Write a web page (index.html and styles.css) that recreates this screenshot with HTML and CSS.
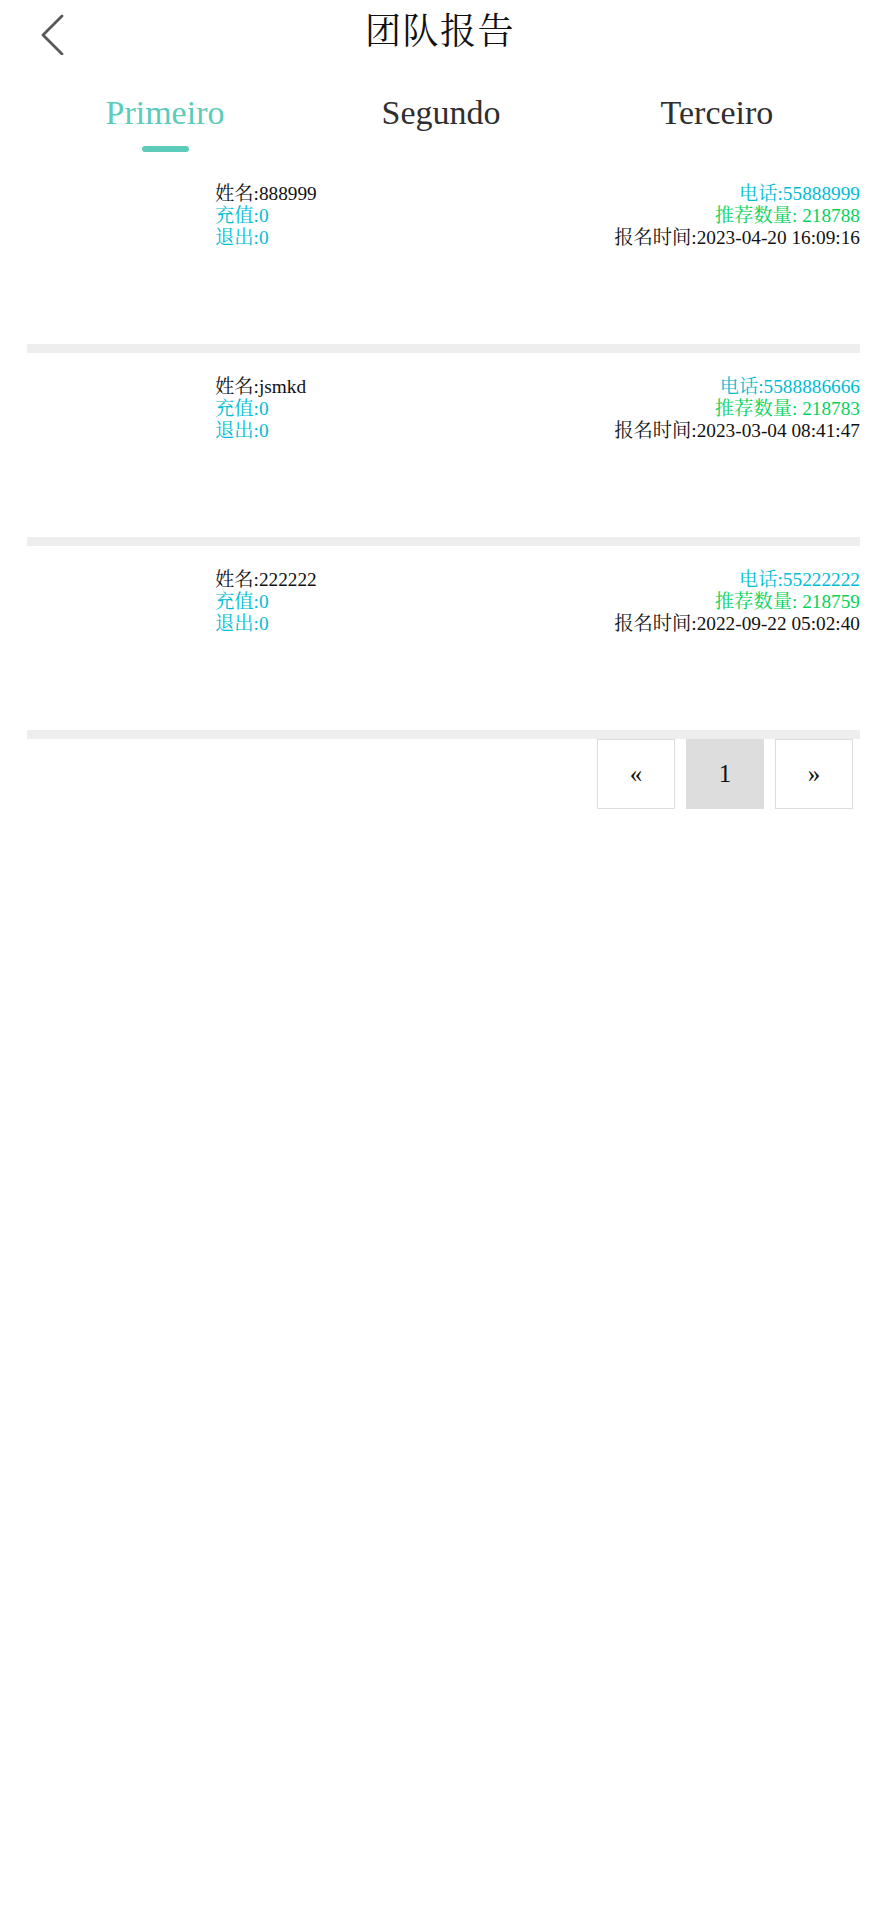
FILE: index.html
```html
<!DOCTYPE html>
<html lang="zh-CN">
<head>
<meta charset="utf-8">
<title>团队报告</title>
<link rel="stylesheet" href="styles.css">
</head>
<body>
<header class="header">
  <div class="back">
    <svg width="26" height="42" viewBox="0 0 26 42" class="back-icon">
      <polyline points="22,3 3,22 22,41" fill="none" stroke="#585858" stroke-width="2.8" stroke-linecap="round" stroke-linejoin="round"/>
    </svg>
  </div>
  <h1 class="title">团队报告</h1>
  <div></div>
</header>

<nav class="tabs">
  <div class="tab active"><span class="tab-label">Primeiro</span><span class="tab-bar"></span></div>
  <div class="tab"><span class="tab-label">Segundo</span></div>
  <div class="tab"><span class="tab-label">Terceiro</span></div>
</nav>

<main class="list">
  <div class="item">
    <div class="thumb"></div>
    <div class="info">
      <div class="col">
        <div class="dark">姓名:888999</div>
        <div class="cyan">充值:0</div>
        <div class="cyan">退出:0</div>
      </div>
      <div class="col right">
        <div class="cyan">电话:55888999</div>
        <div class="green">推荐数量: 218788</div>
        <div class="dark">报名时间:2023-04-20 16:09:16</div>
      </div>
    </div>
  </div>
  <div class="item">
    <div class="thumb"></div>
    <div class="info">
      <div class="col">
        <div class="dark">姓名:jsmkd</div>
        <div class="cyan">充值:0</div>
        <div class="cyan">退出:0</div>
      </div>
      <div class="col right">
        <div class="cyan">电话:5588886666</div>
        <div class="green">推荐数量: 218783</div>
        <div class="dark">报名时间:2023-03-04 08:41:47</div>
      </div>
    </div>
  </div>
  <div class="item">
    <div class="thumb"></div>
    <div class="info">
      <div class="col">
        <div class="dark">姓名:222222</div>
        <div class="cyan">充值:0</div>
        <div class="cyan">退出:0</div>
      </div>
      <div class="col right">
        <div class="cyan">电话:55222222</div>
        <div class="green">推荐数量: 218759</div>
        <div class="dark">报名时间:2022-09-22 05:02:40</div>
      </div>
    </div>
  </div>

  <div class="pager">
    <span class="page">«</span>
    <span class="page current">1</span>
    <span class="page">»</span>
  </div>
</main>
</body>
</html>
```

FILE: styles.css
```css
* { box-sizing: border-box; }

html, body {
  margin: 0;
  padding: 0;
  background: #ffffff;
}

body {
  width: 880px;
  min-height: 1918px;
  font-family: "Liberation Serif", "Noto Serif CJK SC", "Noto Sans CJK SC", serif;
  color: #000;
}

.header {
  height: 64px;
  display: grid;
  grid-template-columns: 1fr auto 1fr;
  align-items: center;
}

.back {
  padding-left: 40px;
  display: flex;
  align-items: center;
  height: 64px;
}

.back-icon {
  display: block;
  margin-top: 4px;
}

.title {
  margin: 0;
  font-size: 36px;
  font-weight: normal;
  line-height: 64px;
  letter-spacing: 1.5px;
  color: #111;
}

.tabs {
  margin: 0 25px 0 27px;
  padding: 29px 0 7px;
  display: grid;
  grid-template-columns: 1fr 1fr 1fr;
}

.tab {
  display: flex;
  flex-direction: column;
  align-items: center;
  height: 60px;
}

.tab-label {
  font-size: 34px;
  line-height: 40px;
  color: #2f2f2f;
}

.tab.active .tab-label {
  color: #5ccbb9;
}

.tab-bar {
  display: block;
  margin-top: 13px;
  width: 47px;
  height: 6px;
  border-radius: 3px;
  background: #5ccbb9;
}

.list {
  margin: 0 20px 0 27px;
}

.item {
  display: flex;
  height: 193px;
  padding-top: 22.5px;
  border-bottom: 9px solid #eeeeee;
}

.thumb {
  width: 188px;
  flex: none;
}

.info {
  flex: 1;
  display: flex;
  justify-content: space-between;
  font-size: 19.3px;
  line-height: 22.2px;
}

.right {
  text-align: right;
}

.dark { color: #111; }
.cyan { color: #00bdd6; }
.green { color: #05d35a; }

.pager {
  display: flex;
  justify-content: flex-end;
  gap: 11px;
  padding-right: 7px;
}

.page {
  width: 78px;
  height: 70px;
  border: 1px solid #dddddd;
  display: flex;
  align-items: center;
  justify-content: center;
  font-size: 25px;
  color: #111;
}

.page.current {
  background: #dddddd;
}
```
